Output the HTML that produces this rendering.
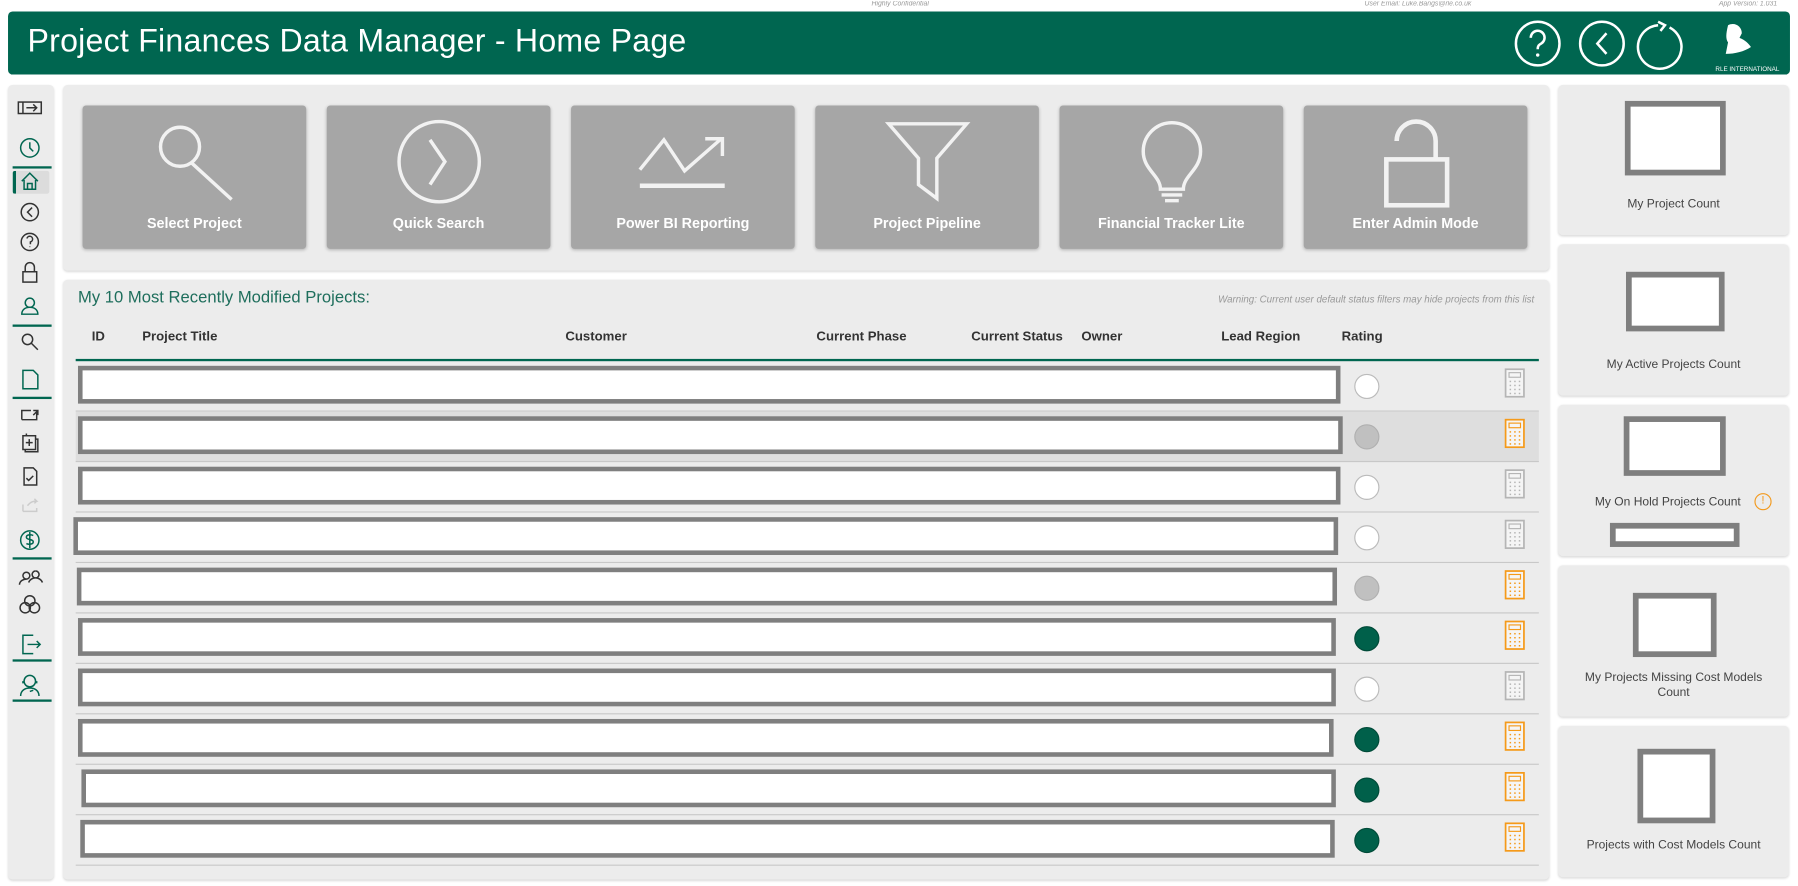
<!DOCTYPE html>
<html><head><meta charset="utf-8"><style>
*{margin:0;padding:0;box-sizing:border-box}
html,body{width:1798px;height:886px;overflow:hidden;background:#fff;font-family:"Liberation Sans",sans-serif}
#w{position:absolute;left:0;top:0;width:1568px;height:773px;transform:scale(1.14668);transform-origin:0 0}
.a{position:absolute}
.tiny{font-size:6px;font-style:italic;color:#999;top:1px}
.hdr{left:7px;top:10px;width:1554px;height:55px;background:#006650;border-radius:4px}
.panel{background:#ececec;border-radius:4px;box-shadow:0 1px 2px rgba(0,0,0,.15)}
.btn{top:92px;width:195px;height:125px;background:#a6a6a6;border-radius:3px;box-shadow:0 1px 3px rgba(0,0,0,.25)}
.btn span{position:absolute;left:0;right:0;top:96px;text-align:center;color:#fff;font-weight:bold;font-size:12.5px}
.btn svg{position:absolute;left:0;top:0}
.ch{top:288px;font-size:11.5px;font-weight:bold;color:#333}
.row{left:66px;width:1276px;height:44px;border-bottom:1px solid #c8c8c8}
.box{position:absolute;top:4px;height:33px;border:4px solid #7f7f7f;background:#fff}
.circ{position:absolute;left:1115px;top:11px;width:22px;height:22px;border-radius:50%}
.calc{position:absolute;left:1246px;top:6px}
.card{left:1359px;width:201px}
.card .rb{position:absolute;border:5px solid #7f7f7f;background:#fff}
.card .lb{position:absolute;left:0;right:0;text-align:center;font-size:10.5px;color:#444}
.sl{position:absolute;left:4px;width:34px;height:2px;background:#006650}
</style></head><body><div id="w">
<div class="a tiny" style="left:760px">Highly Confidential</div>
<div class="a tiny" style="left:1190px">User Email: Luke.Bangs@rle.co.uk</div>
<div class="a tiny" style="left:1499px">App Version: 1.031</div>
<div class="a hdr">
 <div class="a" style="left:17px;top:10px;color:#fff;font-size:28px;letter-spacing:0.2px">Project Finances Data Manager - Home Page</div>
 <svg class="a" style="left:1313px;top:7px" width="235" height="45" viewBox="0 0 235 45">
  <g fill="none" stroke="#fff" stroke-width="2.2">
   <circle cx="21" cy="21" r="19"/>
   <path d="M15 16a6 6 0 1 1 9 5c-2 1-3 2-3 5"/>
   <circle cx="77" cy="21" r="19"/>
   <path d="M81 12l-8 9 8 9"/>
   <path d="M126 5a19 19 0 1 0 10 2"/><path d="M126 2l6 3-4 5"/>
  </g>
  <circle cx="21" cy="31" r="1.5" fill="#fff"/>
  <path d="M187 5c6-3 12 1 12 7l-2 4c5 2 8 5 10 8-6 4-14 6-22 6l2-10c-2-3-2-7 0-15z" fill="#fff"/>
  <text x="176" y="45" font-size="5.5" fill="#fff" font-family="Liberation Sans">RLE INTERNATIONAL</text>
 </svg>
</div>
<!-- sidebar -->
<div class="a panel" style="left:7px;top:74px;width:40px;height:693px">
 <div class="a" style="left:4px;top:75px;width:32px;height:20px;background:#dcdcdc;border-left:3px solid #006650;border-radius:2px"></div>
 <svg class="a" style="left:0;top:0" width="40" height="560" viewBox="0 0 40 560" fill="none" stroke-width="1.3">
  <g stroke="#333"><rect x="9" y="15" width="20" height="10"/><path d="M13 15v10M16 20h9M22 17l3 3-3 3"/></g>
  <g stroke="#006650"><circle cx="19" cy="55" r="8"/><path d="M19 50v5l3 3"/></g>
  <g stroke="#006650"><path d="M12 84l7-7 7 7M14 83v8h10v-8M17 91v-5h4v5"/></g>
  <g stroke="#333"><circle cx="19" cy="111" r="7.5"/><path d="M21 107l-4 4 4 4"/>
   <circle cx="19" cy="137" r="7.5"/><path d="M16.5 134a2.5 2.5 0 1 1 3 3v2M19 141v.5"/>
   <rect x="13" y="163" width="12" height="9"/><path d="M15 163v-4a4 4 0 0 1 8 0v4"/></g>
  <g stroke="#006650"><circle cx="19" cy="190" r="4"/><path d="M12 200c0-4 3-6 7-6s7 2 7 6z"/></g>
  <g stroke="#333"><circle cx="17" cy="222" r="4.5"/><path d="M20 225l6 6"/></g>
  <g stroke="#006650"><path d="M13 249h9l4 4v12h-13z"/></g>
  <g stroke="#333"><path d="M12 292h13v-7M12 292v-8h8M22 284h4v4M26 284l-4 4"/>
   <rect x="13" y="306" width="11" height="12"/><path d="M16 306v-2M24 309h2v11h-11v-2M18.5 309v6M15.5 312h6"/>
   <path d="M14 334h8l3 3v12h-11zM16 343l2 2 4-4"/></g>
  <g stroke="#ccc"><path d="M13 372v-6M13 372h12v-3M17 367c3-4 6-4 8-4l-2-2M25 363l-2 2"/></g>
  <g stroke="#006650"><circle cx="19" cy="397" r="8"/><path d="M22 393c-2-1-6-1-6 1.5s6 1.5 6 4-4 2.5-6 1.5M19 390v14"/></g>
  <g stroke="#333"><circle cx="16" cy="428" r="3"/><path d="M10 436c0-3 3-5 6-5M24 424a3 3 0 1 0 .1 0M18 434c1-3 4-4 6-4s5 1 6 4"/>
   <circle cx="19" cy="450" r="4.5"/><circle cx="15" cy="456" r="4.5"/><circle cx="23" cy="456" r="4.5"/></g>
  <g stroke="#006650"><path d="M22 480h-9v16h9M17 488h11M25 485l3 3-3 3"/>
   <circle cx="19" cy="520" r="5"/><path d="M11 533c0-5 4-7 8-7s8 2 8 7M13 520v2M25 520v2M22 528l-3 1"/></g>
 </svg>
 <div class="sl" style="top:71px"></div>
 <div class="sl" style="top:209px"></div>
 <div class="sl" style="top:272px"></div>
 <div class="sl" style="top:412px"></div>
 <div class="sl" style="top:501px"></div>
 <div class="sl" style="top:536px"></div>
</div>
<!-- buttons panel -->
<div class="a panel" style="left:55px;top:74px;width:1296px;height:162px"></div>
<div class="a btn" style="left:72px"><svg width="195" height="90"><g fill="none" stroke="#f2f2f2" stroke-width="3"><circle cx="85" cy="36" r="17"/><path d="M95 50l35 32"/></g></svg><span>Select Project</span></div>
<div class="a btn" style="left:285px"><svg width="195" height="90"><g fill="none" stroke="#f2f2f2" stroke-width="3"><circle cx="98" cy="49" r="35"/><path d="M90 30l13 19-13 20"/></g></svg><span>Quick Search</span></div>
<div class="a btn" style="left:498px"><svg width="195" height="90"><g fill="none" stroke="#f2f2f2" stroke-width="3"><path d="M60 56l21-26 18 27 32-28M117 29h15v15"/><path d="M60 70h74" stroke-width="4"/></g></svg><span>Power BI Reporting</span></div>
<div class="a btn" style="left:711px"><svg width="195" height="90"><g fill="none" stroke="#f2f2f2" stroke-width="3"><path d="M64 16h68l-26 30v35l-16-12v-23z"/></g></svg><span>Project Pipeline</span></div>
<div class="a btn" style="left:924px"><svg width="195" height="90"><g fill="none" stroke="#f2f2f2" stroke-width="3"><path d="M88 73c0-12-15-17-15-33a25 25 0 0 1 50 0c0 16-15 21-15 33zM89 78h18M92 83h12"/></g></svg><span>Financial Tracker Lite</span></div>
<div class="a btn" style="left:1137px"><svg width="195" height="90"><g fill="none" stroke="#f2f2f2" stroke-width="4"><rect x="72" y="47" width="53" height="40"/><path d="M81 31a17 17 0 0 1 34 0v16"/></g></svg><span>Enter Admin Mode</span></div>
<!-- table panel -->
<div class="a panel" style="left:55px;top:244px;width:1296px;height:523px"></div>
<div class="a" style="left:68px;top:252px;font-size:14.5px;color:#1e6e5c">My 10 Most Recently Modified Projects:</div>
<div class="a" style="left:1000px;width:338px;top:256px;font-size:8.5px;font-style:italic;color:#999;text-align:right">Warning: Current user default status filters may hide projects from this list</div>
<div class="a ch" style="left:80px">ID</div>
<div class="a ch" style="left:124px">Project Title</div>
<div class="a ch" style="left:493px">Customer</div>
<div class="a ch" style="left:712px">Current Phase</div>
<div class="a ch" style="left:847px">Current Status</div>
<div class="a ch" style="left:943px">Owner</div>
<div class="a ch" style="left:1065px">Lead Region</div>
<div class="a ch" style="left:1170px">Rating</div>
<div class="a" style="left:66px;top:313px;width:1276px;height:2px;background:#006650"></div>
<div id="rows"></div>
<!-- cards -->
<div class="a panel card" style="top:74px;height:131px"><div class="rb" style="left:58px;top:14px;width:88px;height:65px"></div><div class="lb" style="top:98px">My Project Count</div></div>
<div class="a panel card" style="top:213px;height:132px"><div class="rb" style="left:59px;top:24px;width:86px;height:52px"></div><div class="lb" style="top:99px">My Active Projects Count</div></div>
<div class="a panel card" style="top:353px;height:132px"><div class="rb" style="left:57px;top:10px;width:89px;height:52px"></div><div class="lb" style="top:79px;left:-10px">My On Hold Projects Count</div>
 <div class="a" style="left:171px;top:77px;width:15px;height:15px;border:1.5px solid #f39a1e;border-radius:50%;color:#f39a1e;font-size:10px;text-align:center;line-height:12px">!</div>
 <div class="rb" style="left:45px;top:103px;width:113px;height:21px"></div></div>
<div class="a panel card" style="top:493px;height:132px"><div class="rb" style="left:65px;top:24px;width:73px;height:56px"></div><div class="lb" style="top:92px;line-height:13px">My Projects Missing Cost Models<br>Count</div></div>
<div class="a panel card" style="top:633px;height:132px"><div class="rb" style="left:69px;top:20px;width:68px;height:65px"></div><div class="lb" style="top:98px">Projects with Cost Models Count</div></div>
</div>
<script>
var c=['e','g','e','e','g','d','e','d','d','d'];
var bx=[[2,1101],[2,1103],[2,1101],[-2,1103],[1,1099],[2,1097],[2,1097],[2,1095],[5,1094],[4,1094]];
var h='';
for(var i=0;i<10;i++){
 var t=315+i*44, k=c[i];
 var cs=k=='e'?'background:#fff;border:1.5px solid #bbb':k=='g'?'background:#c0c0c0;border:1px solid #b0b0b0':'background:#00604a;border:1px solid #004a38';
 var col=(k=='e')?'#b5b5b5':'#f59a1a';
 h+='<div class="a row" style="top:'+t+'px;'+(i==1?'background:#dedede;':'')+'"><div class="box" style="left:'+bx[i][0]+'px;width:'+bx[i][1]+'px"></div><div class="circ" style="'+cs+'"></div>'+
 '<svg class="calc" width="18" height="26" viewBox="0 0 18 26"><rect x="1" y="1" width="16" height="24" fill="#f5f5f5" stroke="'+col+'" stroke-width="1.5"/><rect x="4" y="4" width="10" height="4" fill="none" stroke="'+col+'"/>'+
 [0,1,2,3].map(function(r){return [0,1,2].map(function(q){return '<rect x="'+(4.5+q*4)+'" y="'+(11+r*3.5)+'" width="1.3" height="1.3" fill="'+col+'"/>'}).join('')}).join('')+'</svg></div>';
}
document.getElementById('rows').innerHTML=h;
</script>
</body></html>
